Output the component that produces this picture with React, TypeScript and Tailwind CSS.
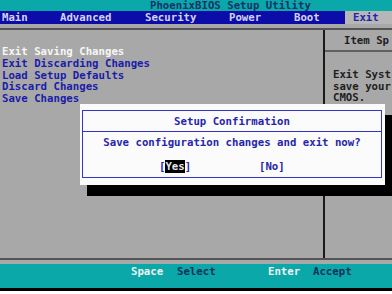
export default function App() {
  const font = "font-['DejaVu_Sans_Mono','Liberation_Mono',monospace] font-bold text-[10.7px]"
  return (
    <div className={`relative w-[392px] h-[294px] overflow-hidden bg-white ${font}`}>
      {/* title bar */}
      <div className="h-[11px] bg-[#0aa8a8] pl-[150px] leading-[11px] text-[#15306a]">PhoenixBIOS Setup Utility</div>

      {/* menu bar */}
      <div className="flex h-[13px] bg-[#0c0ca8] leading-[13px] text-[#d4d4f4]">
        <span className="w-[60px] pl-[2px]">Main</span>
        <span className="w-[85px]">Advanced</span>
        <span className="w-[84px]">Security</span>
        <span className="w-[65px]">Power</span>
        <span className="w-[51px]">Boot</span>
        <span className="flex-1 bg-[#b6b6b6] pl-[8px] text-[#2424b0]">Exit</span>
      </div>

      {/* main panel */}
      <div className="flex h-[240px] flex-col bg-[#a8a8a8] pt-[4px] pb-[4px]">
        <div className="flex flex-1 border-y-2 border-[#555]">
          <div className="w-[323px] pt-[16px] pl-[2px] leading-[11.8px] text-[#1c1ca8]">
            <div className="text-[#f6f6f6]">Exit Saving Changes</div>
            <div>Exit Discarding Changes</div>
            <div>Load Setup Defaults</div>
            <div>Discard Changes</div>
            <div>Save Changes</div>
          </div>
          <div className="flex-1 overflow-hidden border-l-2 border-[#1a1a1a] text-[#1e1e1e]">
            <div className="h-[22px] border-b-2 border-[#606060] pl-[19px] leading-[22px] whitespace-nowrap">Item Sp</div>
            <div className="pt-[17px] pl-[8px] leading-[11.5px] whitespace-nowrap">
              <div>Exit Syst</div>
              <div>save your</div>
              <div>CMOS.</div>
            </div>
          </div>
        </div>
      </div>

      {/* key help bar */}
      <div className="flex h-[24px] bg-[#0aa8a8] pt-[2px] pl-[131px] leading-[12px]">
        <span className="w-[46px] text-[#f2f2f2]">Space</span>
        <span className="w-[91px] text-[#12305a]">Select</span>
        <span className="w-[45px] text-[#f2f2f2]">Enter</span>
        <span className="text-[#12305a]">Accept</span>
      </div>
      <div className="h-[3px] bg-black" />

      {/* confirmation dialog */}
      <div className="absolute left-[80px] top-[104px] h-[81px] w-[305px] bg-[#fbfbfb] pt-[6px] pr-[3px] pb-[7px] pl-[2px] shadow-[7px_11px_0_#000]">
        <div className="flex h-full flex-col border border-[#3434c4] text-[#2626ac]">
          <div className="h-[21px] border-b border-[#3434c4] text-center leading-[21px]">Setup Confirmation</div>
          <div className="pt-[5px] text-center leading-[12px]">Save configuration changes and exit now?</div>
          <div className="flex pt-[12px] pl-[76px] leading-[12px]">
            <span className="w-[100px]">[<span className="bg-black text-[#e8e8e8]">Yes</span>]</span>
            <span>[No]</span>
          </div>
        </div>
      </div>
    </div>
  )
}
